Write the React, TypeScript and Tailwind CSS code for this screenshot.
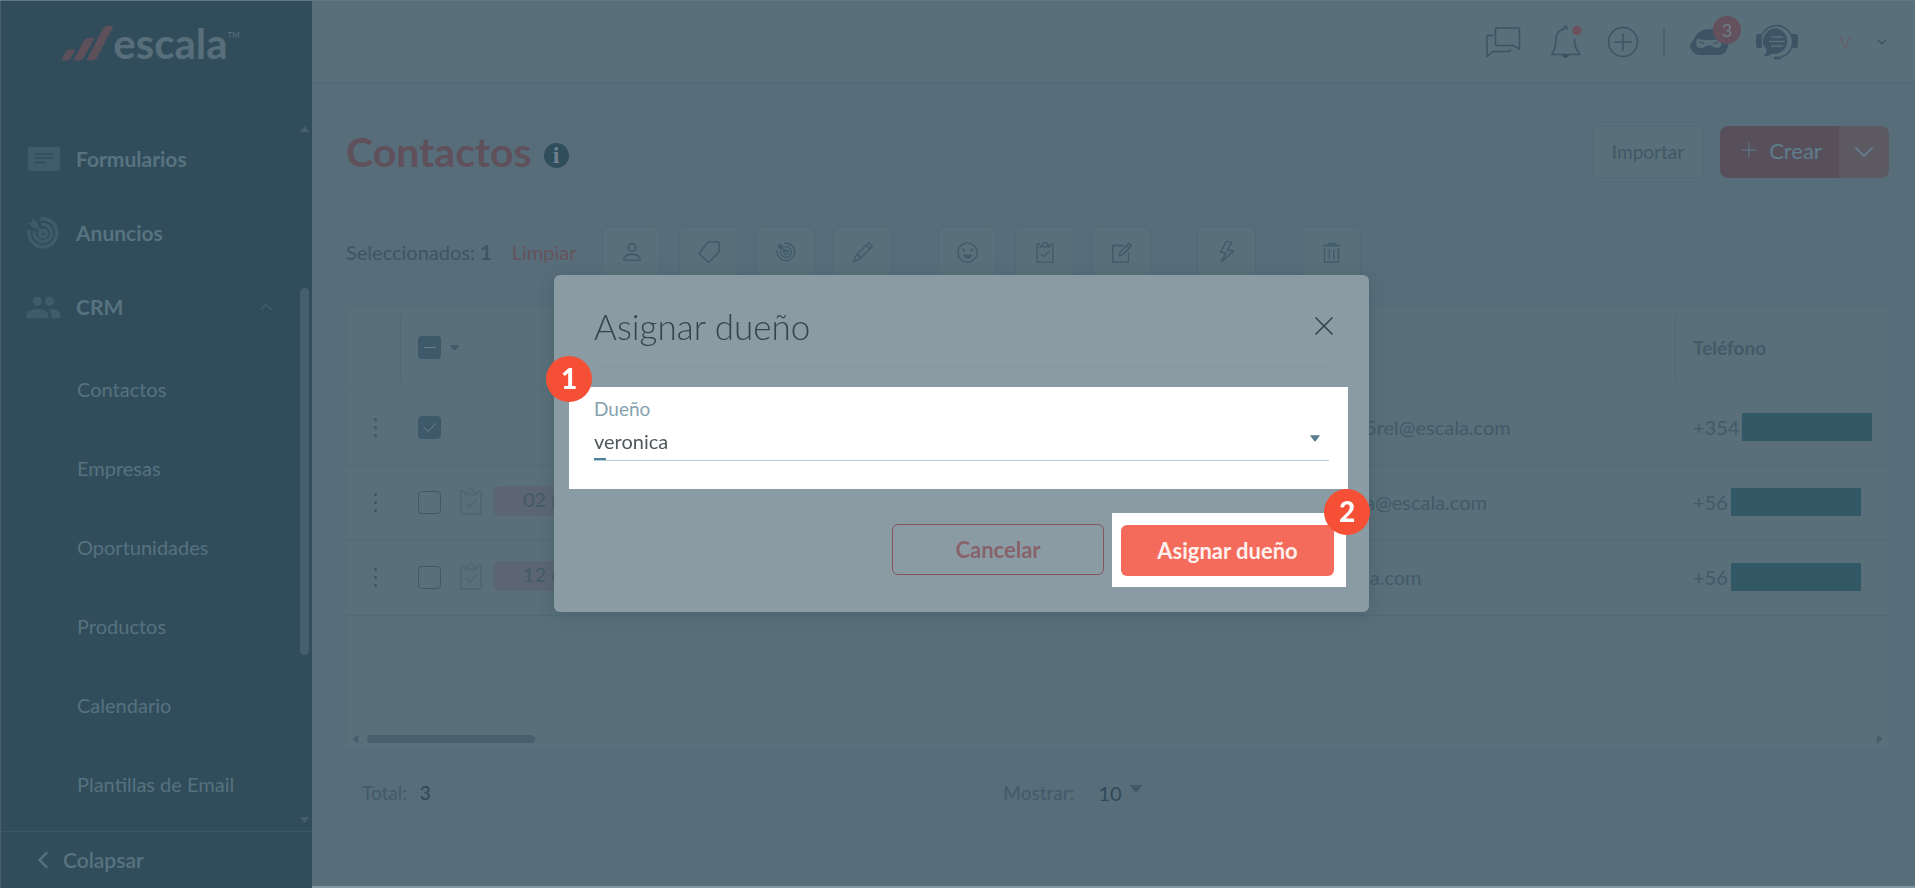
import type { ReactNode } from 'react';
import { MdPeople } from 'react-icons/md';
import { BsLightning, BsPerson, BsPencil } from 'react-icons/bs';
import { ChevronDown, ChevronLeft, ChevronUp, Plus, X } from 'lucide-react';

const subItems = [
  'Contactos',
  'Empresas',
  'Oportunidades',
  'Productos',
  'Calendario',
  'Plantillas de Email',
];

const rows = [
  { checked: true, date: '', email: '5rel@escala.com', prefix: '+354' },
  { checked: false, date: '02 mar', email: 'a@escala.com', prefix: '+56' },
  { checked: false, date: '12 ene', email: 'la.com', prefix: '+56' },
];

function TargetIcon({ className, width }: { className?: string; width: number }) {
  return (
    <svg viewBox="0 0 32 32" className={className} fill="none" stroke="currentColor" strokeWidth={width}>
      <path d="M13 2.2A14 14 0 1 1 2.2 13" />
      <path d="M14 7.8A8.6 8.6 0 1 1 7.6 14" />
      <circle cx="16" cy="16.500" r="3.500" />
      <path d="M16 16.500L9 9.500" strokeWidth="2" />
      <path d="M1 5.500L5 5.500L5.500 1L11 6.500L11.500 11.500L6.500 11Z" fill="currentColor" stroke="none" />
    </svg>
  );
}

function ClipboardIcon({ className }: { className?: string }) {
  return (
    <svg viewBox="0 0 24 28" className={className} fill="none" stroke="currentColor" strokeWidth="1.500">
      <path d="M5.500 4H2V27H22V4H18.500" />
      <path d="M6 7.500V5.500H9Q9 2 12 2T15 5.500H18V7.500Z" />
      <path d="M6.500 16L10.500 20L18 12.500" />
    </svg>
  );
}

function TagIcon({ className }: { className?: string }) {
  return (
    <svg viewBox="0 0 24 24" className={className} fill="none" stroke="currentColor" strokeWidth="1.500" strokeLinejoin="round">
      <path d="M11 2H21Q22 2 22 3V12L11.500 22.500L2 13.500Z" />
    </svg>
  );
}

function SmileIcon({ className }: { className?: string }) {
  return (
    <svg viewBox="0 0 24 24" className={className} fill="none" stroke="currentColor" strokeWidth="1.500">
      <circle cx="12" cy="12" r="11" />
      <circle cx="7.500" cy="9" r="1.500" fill="currentColor" stroke="none" />
      <circle cx="16.500" cy="9" r="1.500" fill="currentColor" stroke="none" />
      <path d="M7 14.500H17Q16 19 12 19T7 14.500Z" fill="currentColor" stroke="none" />
    </svg>
  );
}

function EditIcon({ className }: { className?: string }) {
  return (
    <svg viewBox="0 0 24 24" className={className} fill="none" stroke="currentColor" strokeWidth="1.500">
      <path d="M14 4H2V23H20V12" />
      <path d="M9 16L10.500 11.500L20 1.500L23 4.500L13.500 14.500ZM17.500 4L20.500 7" />
    </svg>
  );
}

function TrashIcon({ className }: { className?: string }) {
  return (
    <svg viewBox="0 0 24 24" className={className} fill="none" stroke="currentColor" strokeWidth="1.500">
      <path d="M2 4H22M8.500 4V1.500H15.500V4M4 7V23H20V7M9.500 8.500V19M14.500 8.500V19" />
    </svg>
  );
}

const actionGroups = [
  [
    { label: 'Asignar dueño', icon: <BsPerson className="size-6" /> },
    { label: 'Etiquetas', icon: <TagIcon className="size-6" /> },
    { label: 'Campañas', icon: <TargetIcon className="size-5" width={2} /> },
    { label: 'Editar', icon: <BsPencil className="size-5" /> },
  ],
  [
    { label: 'Estado', icon: <SmileIcon className="size-[21px]" /> },
    { label: 'Tarea', icon: <ClipboardIcon className="size-[22px]" /> },
    { label: 'Nota', icon: <EditIcon className="size-[21px]" /> },
  ],
  [{ label: 'Automatizar', icon: <BsLightning className="size-[22px] rotate-12" /> }],
  [{ label: 'Eliminar', icon: <TrashIcon className="size-[21px]" /> }],
];

function Caret({ className }: { className: string }) {
  return (
    <svg viewBox="0 0 12 8" className={className} fill="currentColor" aria-hidden="true">
      <path d="M1 0H11Q12.500 0 11.500 1L7 7Q6 8 5 7L0.500 1Q-0.500 0 1 0Z" />
    </svg>
  );
}

function Logo() {
  return (
    <a href="#" className="flex items-center justify-center text-[#586f7b]" aria-label="escala">
      <svg
        viewBox="0 0 52 36"
        className="h-9 w-13"
        fill="#5d505a"
        stroke="#5d505a"
        strokeWidth="2"
        strokeLinejoin="round"
      >
        <path d="M2 34.500L6 26.500Q7 25.500 9 25.500H13L9 32.500Q8 34.500 6 34.500Z" />
        <path d="M14 34.500L24 16Q25 14 27 14H32L22 32Q20.500 34.500 18.500 34.500Z" />
        <path d="M27 34.500L42.500 5Q44 2 46.500 2H51L35 32Q33.500 34.500 31.500 34.500Z" />
      </svg>
      <span className="text-[42px] leading-9 font-bold">escala</span>
      <span className="self-start pt-1 text-[8px] leading-3">TM</span>
    </a>
  );
}

function NavItem({ icon, label, children }: { icon: ReactNode; label: string; children?: ReactNode }) {
  return (
    <a href="#" className="flex h-[74px] items-center text-[21px] font-bold text-[#587380]">
      <span className="flex w-[49px] items-center text-[#3f5c6a]">{icon}</span>
      {label}
      {children}
    </a>
  );
}

function Sidebar() {
  return (
    <aside className="flex w-[312px] shrink-0 flex-col border-l border-[#48606c] bg-[#314d5b]">
      <div className="flex h-[79px] items-center justify-center border-b border-[#2f4a59] pt-1.5 pr-3">
        <Logo />
      </div>
      <div className="flex grow">
        <nav className="grow pt-[42px] pl-[26px]">
          <NavItem
            label="Formularios"
            icon={
              <svg viewBox="0 0 34 24" className="h-6 w-[34px]" fill="currentColor">
                <rect x="1" width="32" height="24" rx="2" />
                <path d="M7 7H27M7 11H27M7 15.500H19" stroke="#314d5b" strokeWidth="1.500" />
              </svg>
            }
          />
          <NavItem label="Anuncios" icon={<TargetIcon className="size-8" width={3.5} />} />
          <NavItem label="CRM" icon={<MdPeople className="-ml-0.5 size-[37px]" />}>
            <ChevronUp className="mr-6 ml-auto size-5" strokeWidth={1} />
          </NavItem>
          <ul className="pt-[5px]">
            {subItems.map((item) => (
              <li key={item}>
                <a href="#" className="flex h-[79px] items-center pl-[50px] text-xl text-[#567280]">
                  {item}
                </a>
              </li>
            ))}
          </ul>
        </nav>
        <div className="flex w-3 flex-col items-start pt-[46px] pb-2 text-[#465f6d]">
          <Caret className="h-1.5 w-[9px] rotate-180" />
          <div className="mt-[156px] h-[367px] w-[9px] rounded-full bg-[#465f6d]" />
          <Caret className="mt-auto h-1.5 w-[9px]" />
        </div>
      </div>
      <button className="flex h-[57px] items-center border-t border-[#3d5764] pl-7 text-[21px] font-semibold text-[#587380]">
        <ChevronLeft className="mr-1.5 size-7" strokeWidth={2} />
        Colapsar
      </button>
    </aside>
  );
}

function Header() {
  return (
    <header className="flex h-[83px] shrink-0 items-center justify-end border-b-2 border-[#526a78] bg-[#596f79] pr-[26px] text-[#3c5464]">
      <button aria-label="Mensajes">
        <svg viewBox="0 0 36 34" className="h-[34px] w-9" fill="none" stroke="currentColor" strokeWidth="1.500">
          <path d="M12 3H33Q34.500 3 34.500 4.500V24L28 20.500H12Q10.500 20.500 10.500 19V4.500Q10.500 3 12 3Z" />
          <path d="M8.500 10.500H3.500Q2 10.500 2 12V31.500L8 26.500H23Q25.500 26.500 25.500 24" />
        </svg>
      </button>
      <button aria-label="Notificaciones" className="ml-7">
        <svg viewBox="0 0 34 34" className="size-[34px]" fill="none" stroke="currentColor" strokeWidth="1.500">
          <path d="M19 4.500Q17.500 4 17.500 1.500H15.500Q15.500 4 13.500 4.500C9 6 7 9.500 7 14C7 20 6 25 3 28.500V29.500H30.500V28.500C27 25 25.500 20 25.500 13.500" />
          <path d="M14 30.500Q16.500 34 19 30.500Z" fill="currentColor" />
          <circle cx="28" cy="5.500" r="4.700" fill="#6b525c" stroke="none" />
        </svg>
      </button>
      <button aria-label="Agregar" className="ml-6">
        <svg viewBox="0 0 32 32" className="size-8" fill="none" stroke="currentColor" strokeWidth="1.500">
          <circle cx="16" cy="16" r="14.500" />
          <path d="M16 7.500V24.500M7.500 16H24.500" />
        </svg>
      </button>
      <span className="ml-6 h-[30px] w-0.5 bg-[#4a6270]" />
      <button aria-label="Ninjas, 3 nuevos" className="relative ml-6">
        <svg viewBox="0 0 40 28" className="h-7 w-10">
          <path d="M1 19C0 15 3 15 5 11C8 4 14 1 21 1S34 4 36 11C36 14 41 15 39 19Q36 27 30 27H11Q4 27 1 19Z" fill="currentColor" />
          <path d="M8 11Q20 13 32 11Q34 20 28 20Q25 20 23 17.500H17Q15 20 12 20Q5 20 8 11Z" fill="#596f79" />
          <path d="M10 13L16 15.500Q12 17.500 10 13ZM30 13L24 15.500Q28 17.500 30 13Z" fill="currentColor" />
        </svg>
        <span className="absolute -top-3 -right-3 flex size-7 items-center justify-center rounded-full bg-[#63515d] text-lg text-[#6f7f89]">
          3
        </span>
      </button>
      <button aria-label="Soporte" className="ml-[26px]">
        <svg viewBox="0 0 44 36" className="h-9 w-11" fill="none" stroke="currentColor">
          <path d="M7 11A16 16 0 1 1 26 33" strokeWidth="1.500" />
          <path d="M7 10H3.500Q1 10 1 13V21Q1 24 3.500 24H7ZM37 10H40.500Q43 10 43 13V21Q43 24 40.500 24H37Z" fill="currentColor" stroke="none" />
          <path d="M22 4.500A12.500 12.500 0 1 1 17 29.500Q13 33 8.500 32Q11.500 30 11.500 25.500A12.500 12.500 0 0 1 22 4.500Z" fill="currentColor" stroke="none" />
          <path d="M16 13H28M14 17.500H30M16 22H28" stroke="#596f79" strokeWidth="1.500" />
          <rect x="19" y="32.500" width="7" height="3" rx="1.500" fill="currentColor" stroke="none" />
        </svg>
      </button>
      <button className="ml-6 flex items-center gap-2">
        <span className="flex size-11 items-center justify-center rounded-full border border-[#5d6d79] text-lg text-[#63636d]">
          V
        </span>
        <ChevronDown className="size-3.5" strokeWidth={2.5} />
      </button>
    </header>
  );
}

function Toolbar() {
  return (
    <div className="mt-12 flex gap-[46px]">
      {actionGroups.map((group, index) => (
        <div key={group[0].label} className="flex gap-[18px]">
          {index === 0 && (
            <div className="-mr-[18px] flex w-64 items-center gap-5 text-xl text-[#3d5563]">
              <span>
                Seleccionados: <strong>1</strong>
              </span>
              <button className="text-[#66535d]">Limpiar</button>
            </div>
          )}
          {group.map((action) => (
            <button
              key={action.label}
              aria-label={action.label}
              className="flex h-13 w-[59px] items-center justify-center rounded-md border border-[#4f6b79] bg-[#596f79] text-[#3f5a68]"
            >
              {action.icon}
            </button>
          ))}
        </div>
      ))}
    </div>
  );
}

function ContactsTable() {
  return (
    <div className="mt-7 bg-[#596f79]">
      <table className="w-full table-fixed text-left text-xl leading-6 text-[#435a68]">
        <colgroup>
          <col className="w-[54px]" />
          <col />
          <col className="w-[310px]" />
          <col className="w-[214px]" />
        </colgroup>
        <thead>
          <tr className="h-[84px] border-b border-[#556b77]">
            <th />
            <th>
              <div className="flex h-[68px] items-center gap-2 border-l border-[#526a77] pl-[17px]">
                <button
                  aria-label="Seleccionar todo"
                  className="flex size-[23px] items-center justify-center rounded bg-[#3d596a]"
                >
                  <span className="h-px w-3 bg-[#6c818d]" />
                </button>
                <Caret className="h-1.5 w-[11px]" />
              </div>
            </th>
            <th />
            <th>
              <div className="flex h-[68px] items-center border-l border-[#4f6775] pl-[17px] text-[19px] font-bold">
                Teléfono
              </div>
            </th>
          </tr>
        </thead>
        <tbody>
          {rows.map((row) => (
            <tr key={row.email} className="h-[75px] border-b border-[#526a77]">
              <td>
                <button aria-label="Opciones" className="flex w-full flex-col items-center gap-[5px] pl-1">
                  <span className="size-[3px] rounded-full bg-[#3f5664]" />
                  <span className="size-[3px] rounded-full bg-[#3f5664]" />
                  <span className="size-[3px] rounded-full bg-[#3f5664]" />
                </button>
              </td>
              <td>
                <div className="flex items-center pl-[18px]">
                  <span className="relative flex">
                    <input
                      type="checkbox"
                      defaultChecked={row.checked}
                      aria-label={`Seleccionar ${row.email}`}
                      className="peer size-[23px] appearance-none rounded border border-[#3d596a] checked:bg-[#3d596a]"
                    />
                    <svg
                      viewBox="0 0 23 23"
                      className="pointer-events-none absolute inset-0 hidden peer-checked:block"
                      fill="none"
                      stroke="#6c818d"
                    >
                      <path d="M5.500 11.500L10 15.500L17.500 7.500" />
                    </svg>
                  </span>
                  {row.date && (
                    <>
                      <ClipboardIcon className="mb-1 ml-[18px] h-7 w-6 text-[#4f6673]" />
                      <span className="mb-1 ml-[10px] flex h-[30px] w-32 items-center rounded-md bg-[#5b6672] pb-1 pl-[30px]">
                        {row.date}
                      </span>
                    </>
                  )}
                </div>
              </td>
              <td className="pb-0.5">{row.email}</td>
              <td className="pb-0.5">
                <div className="flex items-center gap-[3px] pl-[18px]">
                  {row.prefix}
                  <span className="h-7 w-[130px] bg-[#325865]" />
                </div>
              </td>
            </tr>
          ))}
        </tbody>
      </table>
      <div className="flex items-center px-[5px] pt-[119px] pb-1 text-[#465f6d]">
        <Caret className="h-1.5 w-[9px] rotate-90" />
        <div className="ml-[7px] h-2 w-[168px] rounded-full bg-[#48606e]" />
        <Caret className="ml-auto h-1.5 w-[9px] -rotate-90" />
      </div>
    </div>
  );
}

function StepBadge({ className, children }: { className: string; children: ReactNode }) {
  return (
    <span
      className={`absolute flex size-[46px] items-center justify-center rounded-full bg-[#f54f36] pb-0.5 text-[28px] font-black text-white ${className}`}
    >
      {children}
    </span>
  );
}

function AssignOwnerModal() {
  return (
    <div className="fixed inset-0 flex items-center justify-center pb-0.5 pl-2">
      <div
        role="dialog"
        aria-labelledby="assign-title"
        className="w-[815px] rounded-md bg-[#8a9ba3] pb-[25px] shadow-[0_4px_16px_rgba(40,70,85,0.25)]"
      >
        <div className="mr-[35px] ml-10 flex h-[92px] items-center justify-between border-b border-[#84969f] pt-3 text-[#34454f]">
          <h2 id="assign-title" className="text-[35px] font-light">
            Asignar dueño
          </h2>
          <button aria-label="Cerrar" className="-mr-1.5">
            <X className="size-8" strokeWidth={1.25} />
          </button>
        </div>
        <div className="relative mt-5 mr-[21px] ml-[15px] h-[102px] bg-white pt-2 pr-[19px] pl-[25px]">
          <StepBadge className="-top-[31px] -left-[23px]">1</StepBadge>
          <label htmlFor="owner" className="block text-[19px] leading-7 text-[#86a1af]">
            Dueño
          </label>
          <div className="relative border-b border-[#b4cdd8]">
            <select id="owner" className="h-[37px] w-full appearance-none bg-white text-xl text-[#50585c]">
              <option>veronica</option>
            </select>
            <Caret className="pointer-events-none absolute top-3 right-[9px] h-[7px] w-[10px] text-[#5b7c8d]" />
            <span className="absolute bottom-0 left-0 h-0.5 w-3 bg-[#4d8196]" />
          </div>
        </div>
        <div className="mt-6 mr-[23px] flex items-center justify-end gap-2">
          <button className="h-[51px] w-[212px] rounded-md border border-[#86545c] text-[22px] font-bold text-[#88626a]">
            Cancelar
          </button>
          <div className="relative flex bg-white pt-3 pr-3 pb-[11px] pl-[9px]">
            <button className="h-[51px] w-[213px] rounded-md bg-[#f46b5b] text-[22px] font-bold text-[#fff0ed]">
              Asignar dueño
            </button>
            <StepBadge className="-top-6 -right-6">2</StepBadge>
          </div>
        </div>
      </div>
    </div>
  );
}

export default function App() {
  return (
    <div className="flex min-h-screen border-t border-[#627985] bg-[#576d79] font-['Lato','Noto_Sans',sans-serif]">
      <Sidebar />
      <div className="flex min-w-0 grow flex-col">
        <Header />
        <main className="pt-[42px] pr-[26px] pl-[34px]">
          <div className="flex items-center">
            <h1 className="text-[41px] leading-12 font-bold text-[#5f505b]">Contactos</h1>
            <button
              aria-label="Información"
              className="mt-1.5 ml-3 flex size-[25px] items-center justify-center rounded-full bg-[#304d5c] font-['Liberation_Serif',serif] text-2xl leading-6 font-bold text-[#6d818d]"
            >
              i
            </button>
            <button className="ml-auto h-13 w-[110px] rounded-md border border-[#4f6878] bg-[#596f79] text-[19px] text-[#3f5967]">
              Importar
            </button>
            <div className="ml-[17px] flex h-13 overflow-hidden rounded-lg text-[#5f7d8d]">
              <button className="flex w-[119px] items-center justify-center gap-2 bg-[#57505b] pb-1 text-[22px]">
                <Plus className="size-6" strokeWidth={1} />
                Crear
              </button>
              <button aria-label="Más opciones" className="flex w-[50px] items-center justify-center bg-[#5c5962]">
                <ChevronDown className="size-8" strokeWidth={1.5} />
              </button>
            </div>
          </div>
          <Toolbar />
          <ContactsTable />
          <div className="mt-8 flex items-center pl-4 text-[19px] leading-7 text-[#43596a]">
            <p className="w-[42%]">
              Total: <span className="ml-2 font-medium text-[#32495a]">3</span>
            </p>
            <label htmlFor="page-size" className="mr-6">
              Mostrar:
            </label>
            <span className="relative flex">
              <select id="page-size" className="w-12 appearance-none text-xl text-[#30485a]">
                <option>10</option>
              </select>
              <Caret className="pointer-events-none absolute top-1.5 right-1 h-2 w-3" />
            </span>
          </div>
        </main>
        <div className="mt-auto h-0.5 bg-[#8396a0]" />
      </div>
      <AssignOwnerModal />
    </div>
  );
}
